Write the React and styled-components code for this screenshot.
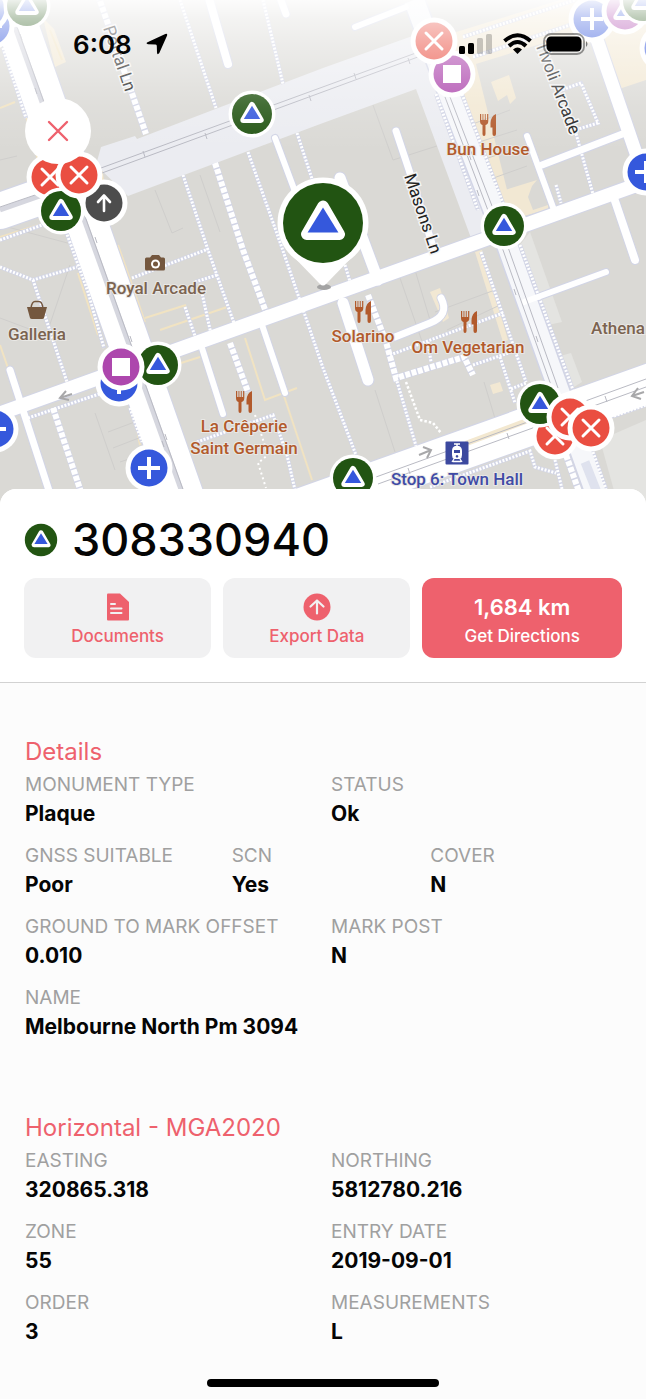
import React from "react";
import styled, { createGlobalStyle } from "styled-components";

const GlobalStyle = createGlobalStyle`
  * {
    box-sizing: border-box;
  }
  body {
    margin: 0;
    background: #fcfcfc;
    color: #050505;
    font-family: Inter, "Liberation Sans", sans-serif;
  }
`;

// main streets: [path, width]
const STREETS = [
  ["M0 211 L60 190", 36],
  ["M5 -10 L195 530", 41],
  ["M-10 417 L656 178", 14],
  ["M300 508 L656 381", 39],
];

const LANES = [
  ["M275 138 L300 205", 6],
  ["M340 178 L378 280", 11],
  ["M208 -5 L228 64", 8],
  ["M279 -5 L286 14", 7],
  ["M355 27 L406 7", 6],
  ["M396 131 L409 170 L434 250", 7],
  ["M592 25 L640 165 L646 185", 13],
  ["M527 136 L554 210", 6],
  ["M542 165 L625 133", 7],
  ["M613 195 L635 260", 8],
  ["M524 302 L606 272", 6],
  ["M343 303 L368 380", 11],
  ["M395 337 L430 323 Q450 315 441 298", 7],
  ["M201 345 L223 414", 6],
  ["M262 325 L285 393", 6],
  ["M10 370 L52 500", 7],
];

const STEPS = [
  "M98 -5 L146 134",
  "M215 163 L243 250 L267 315",
  "M230 343 L248 392",
  "M53 408 L82 495",
  "M368 295 L386 342 L396 378 L464 357 L473 375",
  "M566 455 L582 500",
];

const PATHS = [
  "M180 0 L216 108",
  "M263 0 L283 84",
  "M183 175 L208 250 L235 326",
  "M248 152 L281 245 L323 368 L356 455",
  "M297 133 L314 185",
  "M0 267 L33 280 L77 267",
  "M33 280 L67 382",
  "M132 278 L208 249",
  "M185 307 L197 342",
  "M195 282 L217 275",
  "M200 284 L211 334",
  "M197 442 L273 415 L287 455 L295 490",
  "M3 48 L26 118",
  "M60 215 L88 292 L104 348",
  "M28 402 L100 378",
  "M28 418 L102 393",
  "M130 408 L142 442",
  "M0 240 L45 224",
  "M390 355 L503 313",
  "M428 342 L431 362",
  "M473 365 L523 348",
  "M500 357 L515 403",
  "M511 389 L526 383",
  "M396 378 L416 446",
  "M481 252 L526 382",
  "M520 245 L573 390",
  "M436 94 L478 210",
  "M462 94 L504 206",
  "M556 92 L581 83 L598 123 L575 130 L593 194",
  "M556 185 L561 203",
  "M473 57 L570 25",
  "M463 37 L575 0",
  "M345 265 L351 285",
  "M430 487 L530 451 L535 467 L556 473",
  "M555 460 L562 489",
  "M593 452 L606 489",
  "M614 416 L646 405",
];

const PARCELS = [
  "M155 190 L172 233 L183 228",
  "M200 175 L220 232",
  "M373 105 L393 160 L440 145",
  "M470 125 L510 110",
  "M476 143 L517 130",
  "M482 160 L521 147",
  "M488 180 L527 166",
  "M0 160 L17 156",
  "M75 245 L0 225",
  "M0 318 L32 330",
  "M70 265 L48 330",
  "M95 413 L115 470",
  "M108 432 L140 420",
  "M113 448 L144 436",
  "M120 462 L150 452",
  "M400 278 L425 350",
  "M415 270 L430 320",
  "M435 312 L495 290",
  "M447 330 L500 305",
  "M484 382 L497 425",
  "M375 390 L395 452",
];

const BEIGE_LINES = [
  "M50 30 L62 60",
  "M0 108 L15 102",
  "M22 100 L38 160",
  "M0 237 L48 222",
  "M100 160 L110 230",
  "M118 245 L145 322",
  "M78 273 L98 335",
  "M145 318 L186 305",
  "M0 345 L8 368",
  "M26 398 L96 376",
  "M150 365 L180 440",
  "M245 338 L265 400 L297 388",
  "M160 330 L230 306",
  "M284 396 L312 480",
  "M133 410 L140 445",
  "M181 363 L200 357",
];

const TICKS = [
  [144, 154], [206, 136], [310, 98], [355, 76], [409, 61],
  [21, 37], [36, 91], [96, 240], [131, 339], [166, 437], [163, 444],
  [470, 157], [478, 193], [515, 292], [537, 339], [508, 436], [606, 399], [409, 471],
];

const LABELS = [
  { x: 488, y: 155, text: "Bun House", tone: "food" },
  { x: 363, y: 342, text: "Solarino", tone: "food" },
  { x: 468, y: 353, text: "Om Vegetarian", tone: "food" },
  { x: 244, y: 432, text: "La Crêperie", tone: "food" },
  { x: 244, y: 454, text: "Saint Germain", tone: "food" },
  { x: 156, y: 294, text: "Royal Arcade", tone: "place" },
  { x: 37, y: 340, text: "Galleria", tone: "place" },
  { x: 618, y: 334, text: "Athena", tone: "place" },
  { x: 457, y: 485, text: "Stop 6: Town Hall", tone: "transit" },
];

const TONES = {
  food: "#b25a2c",
  place: "#7b6350",
  transit: "#3f4ba6",
};

const FOOD = [
  [488, 125],
  [363, 312],
  [469, 322],
  [244, 402],
];

// drawn in order, later pins lie over earlier ones
const PINS = [
  { x: -9, y: 26, kind: "plus" },
  { x: -14, y: 9, kind: "plus" },
  { x: 27, y: 6, kind: "triangle" },
  { x: 252, y: 114, kind: "triangle" },
  { x: 104, y: 203, kind: "arrow" },
  { x: 50, y: 177, kind: "cross" },
  { x: 61, y: 211, kind: "triangle" },
  { x: 79, y: 175, kind: "cross" },
  { x: 452, y: 74, kind: "square" },
  { x: 434, y: 41, kind: "cross" },
  { x: 592, y: 19, kind: "plus" },
  { x: 625, y: 11, kind: "purpleTriangle" },
  { x: 643, y: 1, kind: "triangle" },
  { x: 663, y: 48, kind: "plus" },
  { x: 646, y: 172, kind: "plus" },
  { x: 504, y: 226, kind: "triangle" },
  { x: 119, y: 383, kind: "plus" },
  { x: 158, y: 365, kind: "triangle" },
  { x: 121, y: 367, kind: "square" },
  { x: -5, y: 429, kind: "plus" },
  { x: 149, y: 468, kind: "plus" },
  { x: 353, y: 478, kind: "triangle" },
  { x: 555, y: 436, kind: "cross" },
  { x: 540, y: 404, kind: "triangle" },
  { x: 570, y: 417, kind: "cross" },
  { x: 591, y: 428, kind: "cross" },
];

const PIN_COLORS = {
  triangle: "#225412",
  purpleTriangle: "#ad47ad",
  square: "#ad47ad",
  cross: "#ea4e41",
  plus: "#3558dc",
  arrow: "#4d4d4d",
};

const TriangleGlyph = () => (
  <>
    <path
      d="M0 -9 L8.7 6 H-8.7 Z"
      fill="#fff"
      stroke="#fff"
      strokeWidth="6"
      strokeLinejoin="round"
    />
    <path d="M0 -8.2 L8.2 5 H-8.2 Z" fill="#3558dc" />
  </>
);

const PinGlyph = ({ kind }) => {
  if (kind === "square") {
    return <rect x="-9" y="-9" width="18" height="18" fill="#fff" />;
  }
  if (kind === "cross") {
    return (
      <path d="M-8 -8 L8 8 M8 -8 L-8 8" stroke="#fff" strokeWidth="3" strokeLinecap="round" />
    );
  }
  if (kind === "plus") {
    return <path d="M-11 0 H11 M0 -11 V11" stroke="#fff" strokeWidth="4" />;
  }
  if (kind === "arrow") {
    return (
      <path
        d="M0 8 V-7 M-6 -1 L0 -7.5 L6 -1"
        fill="none"
        stroke="#fff"
        strokeWidth="2.6"
        strokeLinecap="round"
        strokeLinejoin="round"
      />
    );
  }
  return <TriangleGlyph />;
};

const Pin = ({ x, y, kind }) => (
  <g transform={`translate(${x} ${y})`}>
    <circle r="23.5" fill="#fff" />
    <circle r={kind === "triangle" ? 20 : 18.5} fill={PIN_COLORS[kind]} />
    <PinGlyph kind={kind} />
  </g>
);

const Cutlery = ({ x, y }) => (
  <g transform={`translate(${x} ${y})`} fill="#b25a2c">
    <path d="M-8 -11 V-4 Q-8 -0.5 -5.5 0 V9 Q-5.5 11 -4 11 Q-2.5 11 -2.5 9 V0 Q0.3 -0.5 0.3 -4 V-11 H-0.9 V-5 H-2.3 V-11 H-3.2 V-5 H-4.6 V-11 H-5.5 V-5 H-6.8 V-11 Z" />
    <path d="M8 -11 Q3 -9 2.5 -2 V2.5 H4.5 V9 Q4.5 11 6.2 11 Q8 11 8 9 Z" />
  </g>
);

const MapView = () => (
  <MapSvg viewBox="0 0 646 505" preserveAspectRatio="xMidYMin slice" role="img" aria-label="Map">
    <rect width="646" height="505" fill="#dad9d5" />

    {/* light paving and plazas */}
    <g fill="#e4e4e1">
      <path d="M520 245 L548 325 L562 322 L530 232 Z" />
      <path d="M553 358 L571 353 L582 382 L566 392 Z" />
      <path d="M600 440 L646 420 V505 H618 Z" />
    </g>
    <g fill="#f2e8d3">
      <path d="M43 18 L54 29 L66 62 L55 67 Z" />
      <path d="M491 82 L509 75 L516 98 L510 104 L507 95 L498 101 Z" />
      <path d="M505 190 L537 180 L532 186 L528 197 L533 210 L548 205 L548 209 L510 220 Z" />
      <path d="M560 40 L646 5 V80 L619 89 L604 45 Z" />
      <path d="M430 40 L560 0 L646 -20 L570 35 L440 75 Z" />
      <path d="M430 292 L440 288 L449 318 L443 322 Z" />
      <path d="M490 385 L500 382 L503 391 L493 394 Z" />
      <path d="M424 60 L474 56 L512 210 L484 215 Z" />
      <path d="M475 252 L482 250 L508 340 L503 342 Z" />
    </g>
    <g fill="none" stroke="#f1e3c2" strokeWidth="2">
      {BEIGE_LINES.map((d) => (
        <path key={d} d={d} />
      ))}
    </g>
    <g fill="none" stroke="#cfcecc" strokeWidth="1">
      {PARCELS.map((d) => (
        <path key={d} d={d} />
      ))}
    </g>

    {/* pedestrian mall */}
    <path
      d="M96 165 L101 147 L135 136 L137 139 L323 68 L418 34 L434 60 L490 236 L471 238 L416 89 L323 123 L128 196 Z"
      fill="#ebecf1"
    />

    <g fill="none" stroke="#d2d5e6">
      {STREETS.concat(LANES).map(([d, w]) => (
        <path key={d} d={d} strokeWidth={w + 2} strokeLinecap="round" />
      ))}
      {STEPS.map((d) => (
        <path key={d} d={d} strokeWidth="7" />
      ))}
      {PATHS.map((d) => (
        <path key={d} d={d} strokeWidth="4" />
      ))}
      <path d="M414 0 L450 97 L507 245 L558 388 L600 505" strokeWidth="23" />
    </g>
    <g fill="none" stroke="#fff">
      <path d="M414 0 L450 97 L507 245 L558 388 L600 505" strokeWidth="20" stroke="#f6f7fa" />
      {STREETS.concat(LANES).map(([d, w]) => (
        <path key={d} d={d} strokeWidth={w} strokeLinecap="round" />
      ))}
      {STEPS.map((d) => (
        <path key={d} d={d} strokeWidth="6" strokeDasharray="5 1.5" />
      ))}
      {PATHS.map((d) => (
        <path key={d} d={d} strokeWidth="3" strokeDasharray="2 1.5" />
      ))}
      <path d="M406 382 L420 420 L433 423 L441 433" strokeWidth="2.5" strokeDasharray="2.5 2" />
      <path d="M255 415 L268 455 L258 463 L266 488" strokeWidth="2" strokeDasharray="2 3" />
    </g>

    {/* tram tracks */}
    <path d="M465 441 L545 411 L547 416 L467 446 Z" fill="#f3e8d0" />
    <g fill="none" stroke="#d6d7df" strokeWidth="5">
      <path d="M15 27 L183 495" />
      <path d="M0 210 L40 196" />
      <path d="M585 462 L600 500" strokeWidth="9" stroke="#dfe2ee" />
    </g>
    <g fill="none" stroke="#b9bac3" strokeWidth="1">
      <path d="M17 27 L185 495" />
      <path d="M0 207 L38 194" />
      <path d="M101 168 L424 50" />
      <path d="M102 173 L426 54" />
      <path d="M445 97 L503 250 L552 388" />
      <path d="M450 97 L509 250 L558 388" />
      <path d="M376 477 L646 379" />
      <path d="M378 484 L646 387" />
      {TICKS.map(([x, y]) => (
        <path key={`${x}-${y}`} d={`M${x - 1} ${y - 3} l2 6`} />
      ))}
    </g>
    <g fill="none" stroke="#a8a8aa" strokeWidth="2">
      <path d="M72 394 L60 398 M66 391 L60 398 L69 400" />
      <path d="M419 455 L431 450 M423 447 L431 450 L427 458" />
      <path d="M644 392 L632 396 M638 388 L632 396 L641 399" />
    </g>

    <g>
      {FOOD.map(([x, y]) => (
        <Cutlery key={`${x}-${y}`} x={x} y={y} />
      ))}
      {/* camera */}
      <g fill="#74573e">
        <path d="M145 259 Q145 257.5 146.5 257.5 H150 L152 255 H159 L161 257.5 H163.5 Q165 257.5 165 259 V269 Q165 270.5 163.5 270.5 H146.5 Q145 270.5 145 269 Z" />
        <circle cx="155.5" cy="264" r="4.5" fill="#fff" />
        <circle cx="155.5" cy="264" r="2.5" />
      </g>
      {/* shopping basket */}
      <g transform="translate(37 310)">
        <path d="M-6 -2 Q-5 -8.5 -2 -8.5 H2 Q5 -8.5 6 -2" fill="none" stroke="#74573e" strokeWidth="1.5" />
        <path d="M-10 -3 H10 L7 8 Q6.5 9 5 9 H-5 Q-6.5 9 -7 8 Z" fill="#74573e" />
      </g>
      {/* tram stop */}
      <g transform="translate(457 453)">
        <rect x="-11.5" y="-11.5" width="23" height="23" rx="1" fill="#3c499f" />
        <path
          d="M-3 -9 H3 M0 -9 V-6"
          stroke="#fff"
          strokeWidth="1.5"
        />
        <path
          fillRule="evenodd"
          fill="#fff"
          d="M-2 -7 H2 Q5 -6 5 -2 V2 Q5 5 3 6 H-3 Q-5 5 -5 2 V-2 Q-5 -6 -2 -7 Z M-3 -3 H3 V0 H-3 Z M0 2 a1.3 1.3 0 1 0 0.01 0 Z"
        />
        <path d="M-3 6 L-5 9 M3 6 L5 9 M-4 8.5 H4" stroke="#fff" strokeWidth="1.3" />
      </g>
    </g>

    {LABELS.map(({ x, y, text, tone }) => (
      <MapLabel key={text} x={x} y={y} fill={TONES[tone]}>
        {text}
      </MapLabel>
    ))}
    <StreetLabel transform="translate(103 28) rotate(71)">Portal Ln</StreetLabel>
    <StreetLabel transform="translate(404 176) rotate(71)">Masons Ln</StreetLabel>
    <StreetLabel transform="translate(535 44) rotate(69)">Tivoli Arcade</StreetLabel>

    {PINS.map((pin) => (
      <Pin key={`${pin.x}-${pin.y}`} {...pin} />
    ))}

    {/* selected mark */}
    <ellipse cx="324" cy="287" rx="7" ry="3" fill="#a3a3a3" />
    <path d="M286 249 L320 284 Q323 287 326 284 L360 249 Z" fill="#fff" />
    <circle cx="323" cy="223" r="45.5" fill="#fff" />
    <circle cx="323" cy="223" r="40" fill="#225412" />
    <g transform="translate(323 223) scale(1.88)">
      <TriangleGlyph />
    </g>
  </MapSvg>
);

const StatusIcons = () => (
  <svg width="130" height="24" viewBox="0 0 130 24" aria-hidden="true">
    <rect x="0" y="14" width="6" height="8" rx="1.5" />
    <rect x="9" y="11" width="6" height="11" rx="1.5" />
    <rect x="18" y="6" width="6" height="16" rx="1.5" opacity="0.2" />
    <rect x="27" y="2" width="6" height="20" rx="1.5" opacity="0.2" />
    <g fill="none" stroke="#000" strokeWidth="4">
      <path d="M45.5 9 Q58.5 -2.5 71.5 9" />
      <path d="M50 14 Q58.5 6 67 14" />
    </g>
    <path d="M54 17.5 Q58.5 13.5 63 17.5 L58.5 22 Z" />
    <rect x="85" y="2" width="40" height="20" rx="7" fill="none" stroke="#000" strokeOpacity="0.4" strokeWidth="1.8" />
    <rect x="87.5" y="4.5" width="35" height="15" rx="4.5" />
    <path d="M127 9 Q130 12 127 15 Z" opacity="0.5" />
  </svg>
);

const DocumentIcon = () => (
  <svg width="28" height="28" viewBox="0 0 28 28" aria-hidden="true">
    <path d="M4 0.5 H16 L25 9 V26.5 Q25 27.5 24 27.5 H4 Q3 27.5 3 26.5 V1.5 Q3 0.5 4 0.5 Z" fill="#ee616d" />
    <path d="M7 11 H11 M7 15.5 H17.5 M7 20 H17.5" stroke="#f1f1f2" strokeWidth="2" strokeLinecap="round" />
  </svg>
);

const ExportIcon = () => (
  <svg width="28" height="28" viewBox="0 0 28 28" aria-hidden="true">
    <circle cx="14" cy="14" r="13.5" fill="#ee616d" />
    <path
      d="M14 20.5 V7.5 M7.5 13.5 L14 7.5 L20.5 13.5"
      fill="none"
      stroke="#f1f1f2"
      strokeWidth="2.2"
      strokeLinecap="round"
      strokeLinejoin="round"
    />
  </svg>
);

const DETAILS = [
  [
    ["Monument type", "Plaque"],
    ["Status", "Ok"],
  ],
  [
    ["GNSS suitable", "Poor"],
    ["SCN", "Yes"],
    ["Cover", "N"],
  ],
  [
    ["Ground to mark offset", "0.010"],
    ["Mark post", "N"],
  ],
  [["Name", "Melbourne North Pm 3094"]],
];

const HORIZONTAL = [
  [
    ["Easting", "320865.318"],
    ["Northing", "5812780.216"],
  ],
  [
    ["Zone", "55"],
    ["Entry date", "2019-09-01"],
  ],
  [
    ["Order", "3"],
    ["Measurements", "L"],
  ],
];

const FieldSection = ({ title, rows }) => (
  <Section>
    <SectionTitle>{title}</SectionTitle>
    {rows.map((row) => (
      <FieldRow key={row[0][0]}>
        {row.map(([label, value]) => (
          <Field key={label}>
            <FieldLabel>{label.toUpperCase()}</FieldLabel>
            <FieldValue>{value}</FieldValue>
          </Field>
        ))}
      </FieldRow>
    ))}
  </Section>
);

const App = () => {
  return (
    <Screen>
      <GlobalStyle />
      <MapBox>
        <MapView />
        <MapFade />
        <StatusBar>
          <Clock>
            6:08
            <svg width="22" height="22" viewBox="0 0 22 22" aria-hidden="true">
              <path d="M19.3 1 Q21.8 0.2 21 2.7 L13.3 20 Q11.3 22.5 11 19.5 L10.8 12.8 Q10.6 11.6 9.3 11.5 L2 11.3 Q-0.6 10.7 1.5 9.2 Z" />
            </svg>
          </Clock>
          <StatusIcons />
        </StatusBar>
        <CloseButton aria-label="Close">
          <svg width="22" height="22" viewBox="0 0 22 22" aria-hidden="true">
            <path d="M2 2 L20 20 M20 2 L2 20" stroke="#ee616d" strokeWidth="2.4" strokeLinecap="round" />
          </svg>
        </CloseButton>
      </MapBox>
      <Sheet>
        <SheetHeader>
          <TitleRow>
            <svg width="34" height="34" viewBox="-21 -21 42 42" aria-hidden="true">
              <circle r="20" fill="#225412" />
              <TriangleGlyph />
            </svg>
            <Title>308330940</Title>
          </TitleRow>
          <Actions>
            <ActionButton>
              <DocumentIcon />
              <ActionText>Documents</ActionText>
            </ActionButton>
            <ActionButton>
              <ExportIcon />
              <ActionText>Export Data</ActionText>
            </ActionButton>
            <ActionButton $primary>
              <Distance>1,684 km</Distance>
              <ActionText>Get Directions</ActionText>
            </ActionButton>
          </Actions>
        </SheetHeader>
        <SheetBody>
          <FieldSection title="Details" rows={DETAILS} />
          <FieldSection title="Horizontal - MGA2020" rows={HORIZONTAL} />
        </SheetBody>
        <HomeArea>
          <HomeIndicator />
        </HomeArea>
      </Sheet>
    </Screen>
  );
};

export default App;

const Screen = styled.div`
  min-height: 100vh;
  overflow: hidden;
`;

const MapBox = styled.div`
  position: relative;
`;

const MapSvg = styled.svg`
  display: block;
  width: 100%;
  height: auto;
`;

const MapLabel = styled.text`
  font-family: Roboto, sans-serif;
  font-size: 17px;
  font-weight: 500;
  text-anchor: middle;
  stroke: #e9e8e5;
  stroke-width: 2px;
  paint-order: stroke;
`;

const StreetLabel = styled.text`
  font-family: Roboto, sans-serif;
  font-size: 17px;
  fill: #222;
  stroke: #f4f4f4;
  stroke-width: 3px;
  paint-order: stroke;
`;

const MapFade = styled.div`
  position: absolute;
  top: 0;
  left: 0;
  right: 0;
  height: 150px;
  background: linear-gradient(
    rgba(255, 255, 255, 0.92),
    rgba(255, 255, 255, 0.7) 12%,
    rgba(255, 255, 255, 0.5) 30%,
    rgba(255, 255, 255, 0.32) 50%,
    rgba(255, 255, 255, 0.15) 70%,
    rgba(255, 255, 255, 0)
  );
  pointer-events: none;
`;

const StatusBar = styled.div`
  position: absolute;
  top: 0;
  left: 0;
  right: 0;
  height: 88px;
  display: flex;
  align-items: center;
  justify-content: space-between;
  padding: 0 57px 0 73px;
`;

const Clock = styled.span`
  display: flex;
  align-items: center;
  gap: 14px;
  font-size: 26px;
  font-weight: 600;
`;

const CloseButton = styled.button`
  position: absolute;
  top: 98px;
  left: 25px;
  width: 66px;
  height: 66px;
  display: flex;
  align-items: center;
  justify-content: center;
  padding: 0;
  border: none;
  border-radius: 50%;
  background: #fff;
  cursor: pointer;
`;

const Sheet = styled.main`
  position: relative;
  margin-top: -16px;
  border-radius: 16px 16px 0 0;
  background: #fcfcfc;
  overflow: hidden;
`;

const SheetHeader = styled.header`
  padding: 25px 24px 24px;
  background: #fff;
  border-bottom: 1px solid #d2d2d2;
`;

const TitleRow = styled.div`
  display: flex;
  align-items: center;
  gap: 14px;
  margin-bottom: 12px;
`;

const Title = styled.h1`
  margin: 0;
  font-size: 45px;
  font-weight: 500;
  line-height: 52px;
`;

const Actions = styled.div`
  display: grid;
  grid-template-columns: 15fr 15fr 16fr;
  gap: 12px;
`;

const ActionButton = styled.button`
  display: flex;
  flex-direction: column;
  align-items: center;
  justify-content: center;
  gap: 3px;
  height: 80px;
  padding: 4px 0 0;
  border: none;
  border-radius: 12px;
  font-family: inherit;
  cursor: pointer;
  color: ${(props) => (props.$primary ? "#fff" : "#ee616d")};
  background: ${(props) => (props.$primary ? "#ee616d" : "#f1f1f2")};
`;

const ActionText = styled.span`
  font-size: 17px;
  font-weight: 500;
  line-height: 24px;
`;

const Distance = styled.span`
  font-size: 22px;
  font-weight: 600;
  line-height: 28px;
`;

const SheetBody = styled.div`
  padding: 51px 25px 0;
`;

const Section = styled.section`
  & + & {
    padding-top: 56px;
  }
`;

const SectionTitle = styled.h2`
  margin: 0;
  font-size: 24px;
  font-weight: 400;
  line-height: 36px;
  color: #ee616d;
`;

const FieldRow = styled.dl`
  display: grid;
  grid-auto-flow: column;
  grid-auto-columns: minmax(0, 1fr);
  margin: 0 0 13px;
`;

const Field = styled.div`
  & + & {
    padding-left: 8px;
  }
`;

const FieldLabel = styled.dt`
  font-size: 19px;
  line-height: 29px;
  color: #a0a0a0;
`;

const FieldValue = styled.dd`
  margin: 0;
  font-size: 21px;
  font-weight: 700;
  line-height: 29px;
`;

const HomeArea = styled.div`
  padding: 20px 0 12px;
`;

const HomeIndicator = styled.div`
  width: 36%;
  height: 8px;
  margin: 0 auto;
  border-radius: 4px;
  background: #000;
`;
